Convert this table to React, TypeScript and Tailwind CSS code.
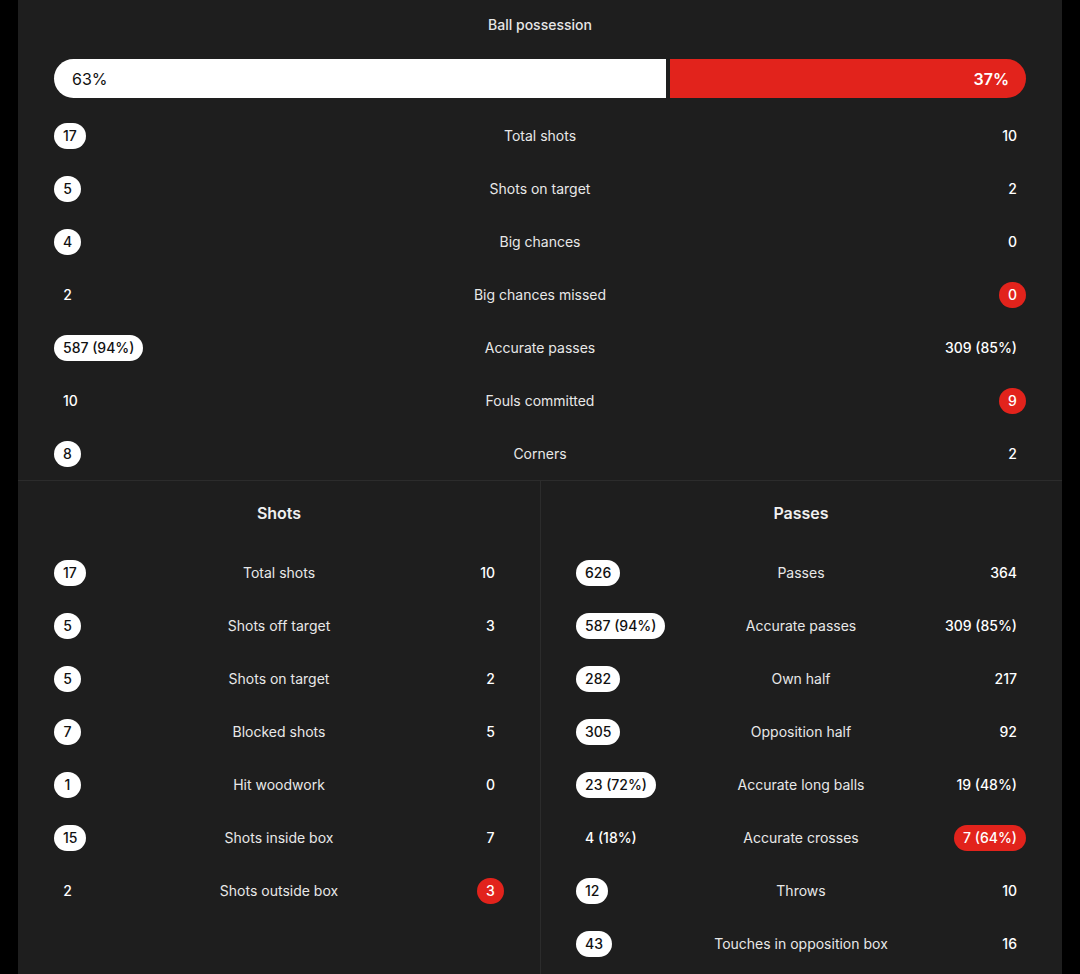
import React from "react";

type Kind = "white" | "red" | "plain";
type Stat = { label: string; l: string; lk: Kind; r: string; rk: Kind };

const top: Stat[] = [
  { label: "Total shots", l: "17", lk: "white", r: "10", rk: "plain" },
  { label: "Shots on target", l: "5", lk: "white", r: "2", rk: "plain" },
  { label: "Big chances", l: "4", lk: "white", r: "0", rk: "plain" },
  { label: "Big chances missed", l: "2", lk: "plain", r: "0", rk: "red" },
  { label: "Accurate passes", l: "587 (94%)", lk: "white", r: "309 (85%)", rk: "plain" },
  { label: "Fouls committed", l: "10", lk: "plain", r: "9", rk: "red" },
  { label: "Corners", l: "8", lk: "white", r: "2", rk: "plain" },
];

const shots: Stat[] = [
  { label: "Total shots", l: "17", lk: "white", r: "10", rk: "plain" },
  { label: "Shots off target", l: "5", lk: "white", r: "3", rk: "plain" },
  { label: "Shots on target", l: "5", lk: "white", r: "2", rk: "plain" },
  { label: "Blocked shots", l: "7", lk: "white", r: "5", rk: "plain" },
  { label: "Hit woodwork", l: "1", lk: "white", r: "0", rk: "plain" },
  { label: "Shots inside box", l: "15", lk: "white", r: "7", rk: "plain" },
  { label: "Shots outside box", l: "2", lk: "plain", r: "3", rk: "red" },
];

const passes: Stat[] = [
  { label: "Passes", l: "626", lk: "white", r: "364", rk: "plain" },
  { label: "Accurate passes", l: "587 (94%)", lk: "white", r: "309 (85%)", rk: "plain" },
  { label: "Own half", l: "282", lk: "white", r: "217", rk: "plain" },
  { label: "Opposition half", l: "305", lk: "white", r: "92", rk: "plain" },
  { label: "Accurate long balls", l: "23 (72%)", lk: "white", r: "19 (48%)", rk: "plain" },
  { label: "Accurate crosses", l: "4 (18%)", lk: "plain", r: "7 (64%)", rk: "red" },
  { label: "Throws", l: "12", lk: "white", r: "10", rk: "plain" },
  { label: "Touches in opposition box", l: "43", lk: "white", r: "16", rk: "plain" },
];

function Val({ v, k }: { v: string; k: Kind }) {
  if (k === "white")
    return (
      <span className="inline-flex h-[26px] min-w-[27px] items-center justify-center rounded-full bg-white px-[9px] text-[14px] font-medium text-[#111]">
        {v}
      </span>
    );
  if (k === "red")
    return (
      <span className="inline-flex h-[26px] min-w-[27px] items-center justify-center rounded-full bg-[#e2231c] px-[9px] text-[14px] font-medium text-white">
        {v}
      </span>
    );
  return (
    <span className="inline-flex h-[26px] min-w-[27px] items-center justify-center px-[9px] text-[14px] font-medium text-white">
      {v}
    </span>
  );
}

function Row({ s }: { s: Stat }) {
  return (
    <div className="grid h-[53px] grid-cols-[1fr_auto_1fr] items-center">
      <div className="justify-self-start">
        <Val v={s.l} k={s.lk} />
      </div>
      <div className="text-center text-[14px] text-[#e8e8e8]">{s.label}</div>
      <div className="justify-self-end">
        <Val v={s.r} k={s.rk} />
      </div>
    </div>
  );
}

function Section({ title, rows, border }: { title: string; rows: Stat[]; border?: boolean }) {
  return (
    <div className={`pt-[22px] ${border ? "border-l border-[#2c2c2c] pl-[35px] pr-9" : "px-9"}`}>
      <div className="h-5 text-center text-[16px] font-semibold leading-5 text-[#f0f0f0]">{title}</div>
      <div className="mt-[23px]">
        {rows.map((s) => (
          <Row key={s.label} s={s} />
        ))}
      </div>
    </div>
  );
}

export default function App() {
  return (
    <div
      className="flex min-h-screen bg-black px-[18px]"
      style={{ fontFamily: "Inter, 'Noto Sans', sans-serif" }}
    >
      <div className="flex min-h-[974px] flex-1 flex-col bg-[#1e1e1e]">
        <div className="border-b border-[#2c2c2c] px-9 pt-[15px]">
          <div className="h-5 text-center text-[14px] font-medium leading-5 text-[#e6e6e6]">Ball possession</div>
          <div className="mt-6 flex h-[39px] gap-1">
            <div className="flex w-[63%] items-center rounded-l-full bg-white pl-[18px] text-[16px] text-[#111]">
              63%
            </div>
            <div className="flex flex-1 items-center justify-end rounded-r-full bg-[#e2231c] pr-[17px] text-[16px] font-semibold text-white">
              37%
            </div>
          </div>
          <div className="mt-[11px]">
            {top.map((s) => (
              <Row key={s.label} s={s} />
            ))}
          </div>
        </div>
        <div className="grid flex-1 grid-cols-2">
          <Section title="Shots" rows={shots} />
          <Section title="Passes" rows={passes} border />
        </div>
      </div>
    </div>
  );
}
